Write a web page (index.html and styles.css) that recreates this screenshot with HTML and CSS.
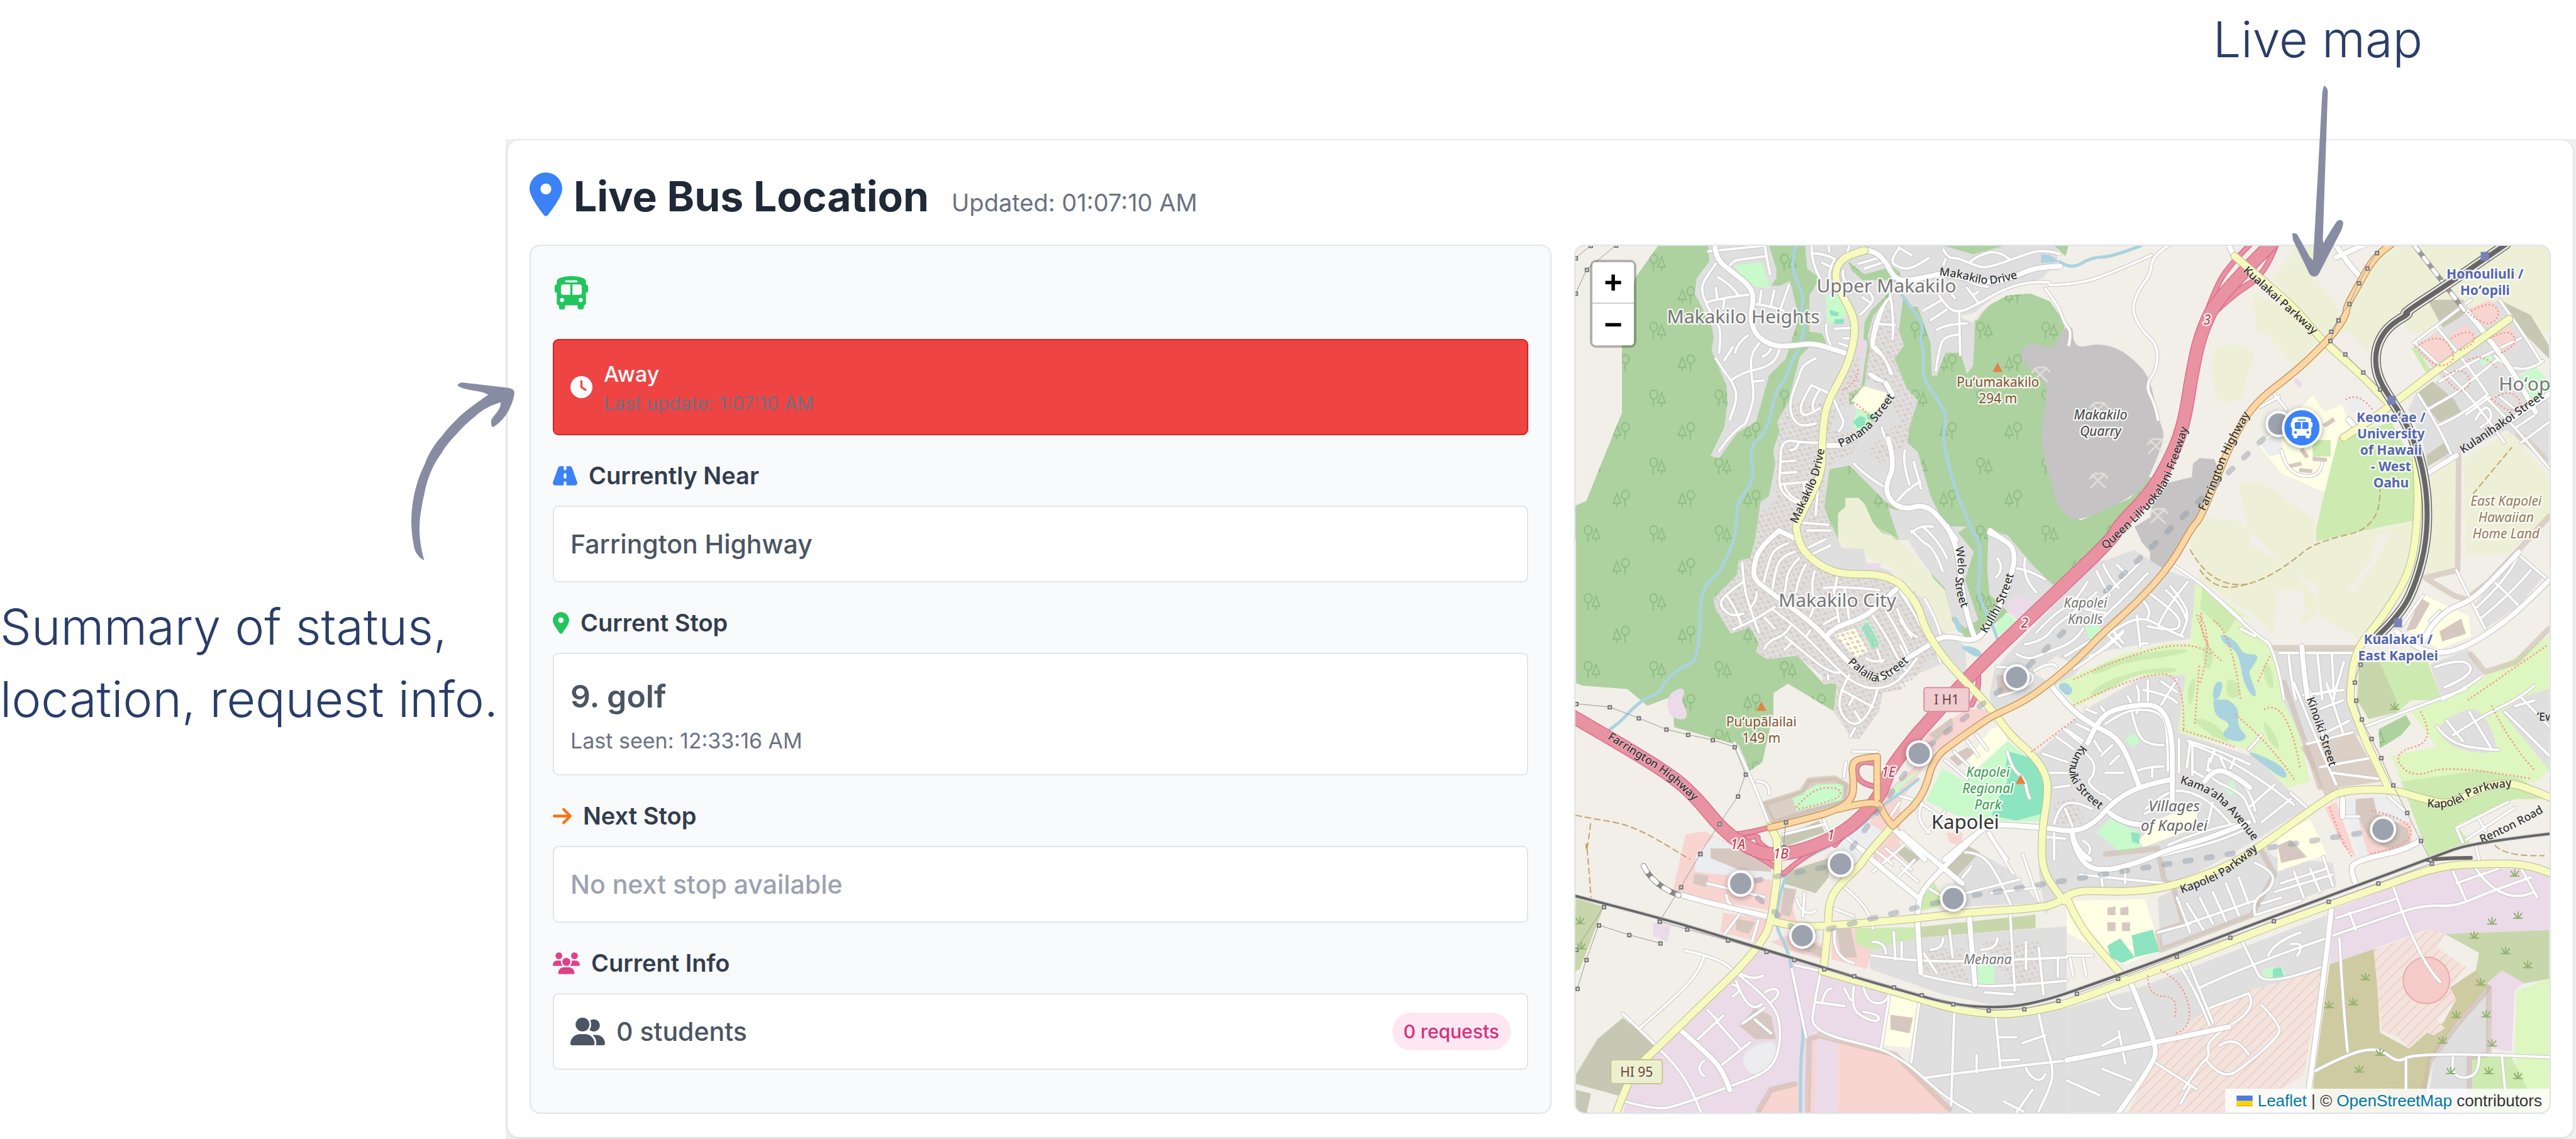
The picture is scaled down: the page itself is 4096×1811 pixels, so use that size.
FILE: index.html
```html
<!DOCTYPE html>
<html lang="en">
<head>
<meta charset="utf-8">
<meta name="viewport" content="width=device-width, initial-scale=1">
<title>Live Bus Location</title>
<link rel="stylesheet" href="styles.css">
</head>
<body>
<svg class="sprite" aria-hidden="true">
  <symbol id="i-pin" viewBox="0 0 384 512"><path d="M215.7 499.2C267 435 384 279.4 384 192C384 86 298 0 192 0S0 86 0 192c0 87.4 117 243 168.3 307.2c12.3 15.3 35.1 15.3 47.4 0zM192 128a64 64 0 1 1 0 128 64 64 0 1 1 0-128z"/></symbol>
  <symbol id="i-clock" viewBox="0 0 512 512"><path d="M256 0a256 256 0 1 1 0 512A256 256 0 1 1 256 0zM232 120V256c0 8 4 15.5 10.7 20l96 64c11 7.4 25.9 4.4 33.3-6.7s4.4-25.9-6.7-33.3L280 243.2V120c0-13.3-10.7-24-24-24s-24 10.7-24 24z"/></symbol>
  <symbol id="i-road" viewBox="0 0 576 512"><path d="M256 32H181.2c-27.1 0-51.3 17.1-60.3 42.6L3.1 407.2C1.1 413 0 419.2 0 425.4C0 455.5 24.5 480 54.6 480H256V416c0-17.7 14.3-32 32-32s32 14.3 32 32v64H521.4c30.2 0 54.6-24.5 54.6-54.6c0-6.2-1.1-12.4-3.1-18.2L455.1 74.6C446 49.1 421.9 32 394.8 32H320V96c0 17.7-14.3 32-32 32s-32-14.3-32-32V32zm64 192v64c0 17.7-14.3 32-32 32s-32-14.3-32-32V224c0-17.7 14.3-32 32-32s32 14.3 32 32z"/></symbol>
  <symbol id="i-arrow" viewBox="0 0 448 512"><path d="M438.6 278.6c12.5-12.5 12.5-32.8 0-45.3l-160-160c-12.5-12.5-32.8-12.5-45.3 0s-12.5 32.8 0 45.3L338.8 224H32c-17.7 0-32 14.3-32 32s14.3 32 32 32H338.7L233.4 393.4c-12.5 12.5-12.5 32.8 0 45.3s32.8 12.5 45.3 0l160-160z"/></symbol>
  <symbol id="i-bus" viewBox="0 0 512 512"><path d="M256 0C390.4 0 480 35.2 480 80V96l0 32c17.7 0 32 14.3 32 32v64c0 17.7-14.3 32-32 32l0 160c0 17.7-14.3 32-32 32v32c0 17.7-14.3 32-32 32H384c-17.7 0-32-14.3-32-32V448H160v32c0 17.7-14.3 32-32 32H96c-17.7 0-32-14.3-32-32l0-32c-17.7 0-32-14.3-32-32l0-160c-17.7 0-32-14.3-32-32V160c0-17.7 14.3-32 32-32h0V96h0V80C32 35.2 121.6 0 256 0zM96 160v96c0 17.7 14.3 32 32 32H240V128H128c-17.7 0-32 14.3-32 32zM272 288H384c17.7 0 32-14.3 32-32V160c0-17.7-14.3-32-32-32H272V288zM112 400a32 32 0 1 0 0-64 32 32 0 1 0 0 64zm288 0a32 32 0 1 0 0-64 32 32 0 1 0 0 64zM352 80c0-8.8-7.2-16-16-16H176c-8.8 0-16 7.2-16 16s7.2 16 16 16H336c8.8 0 16-7.2 16-16z"/></symbol>
  <symbol id="i-users" viewBox="0 0 640 512"><path d="M144 0a80 80 0 1 1 0 160A80 80 0 1 1 144 0zM512 0a80 80 0 1 1 0 160A80 80 0 1 1 512 0zM0 298.7C0 239.8 47.8 192 106.7 192h42.7c15.9 0 31 3.5 44.6 9.7c-1.3 7.2-1.9 14.7-1.9 22.3c0 38.2 16.8 72.5 43.3 96c-.2 0-.4 0-.7 0H21.3C9.6 320 0 310.4 0 298.7zM405.3 320c-.2 0-.4 0-.7 0c26.6-23.5 43.3-57.8 43.3-96c0-7.6-.7-15-1.9-22.3c13.6-6.3 28.7-9.7 44.6-9.7h42.7C592.2 192 640 239.8 640 298.7c0 11.8-9.6 21.3-21.3 21.3H405.3zM224 224a96 96 0 1 1 192 0 96 96 0 1 1 -192 0zM128 485.3C128 411.7 187.7 352 261.3 352H378.7C452.3 352 512 411.7 512 485.3c0 14.7-11.9 26.7-26.7 26.7H154.7c-14.7 0-26.7-11.9-26.7-26.7z"/></symbol>
  <symbol id="i-group" viewBox="0 0 640 512"><path d="M96 128a128 128 0 1 1 256 0A128 128 0 1 1 96 128zM0 482.3C0 383.8 79.8 304 178.3 304h91.4C368.2 304 448 383.8 448 482.3c0 16.4-13.3 29.7-29.7 29.7H29.7C13.3 512 0 498.7 0 482.3zM609.3 512H471.4c5.4-9.4 8.6-20.3 8.6-32v-8c0-60.7-27.1-115.2-69.8-151.8c2.4-.1 4.7-.2 7.1-.2h61.4C567.8 320 640 392.2 640 481.3c0 17-13.8 30.7-30.7 30.7zM432 256c-31 0-59-12.6-79.3-32.9C372.4 196.5 384 163.6 384 128c0-26.8-6.6-52.1-18.3-74.3C384.3 40.1 407.2 32 432 32c61.9 0 112 50.1 112 112s-50.1 112-112 112z"/></symbol>
</svg>

<div class="page">
  <p class="note note-map">Live map</p>
  <p class="note note-summary">Summary of status,<br>location, request info.</p>

  <div class="app">
    <main class="card">
      <header class="card-head">
        <svg class="icon icon-title" aria-hidden="true"><use href="#i-pin"/></svg>
        <h1 class="title">Live Bus Location</h1>
        <span class="updated">Updated: 01:07:10 AM</span>
      </header>

      <div class="panels">
        <section class="status">
          <div class="bus-row"><svg class="icon icon-bus" aria-hidden="true"><use href="#i-bus"/></svg></div>

          <div class="alert" role="status">
            <svg class="icon icon-clock" aria-hidden="true"><use href="#i-clock"/></svg>
            <div class="alert-text">
              <p class="alert-title">Away</p>
              <p class="alert-time">Last update: 1:07:10 AM</p>
            </div>
          </div>

          <section class="block">
            <h2 class="label"><svg class="icon icon-road" aria-hidden="true"><use href="#i-road"/></svg>Currently Near</h2>
            <div class="box"><p class="value">Farrington Highway</p></div>
          </section>

          <section class="block">
            <h2 class="label"><svg class="icon icon-stop" aria-hidden="true"><use href="#i-pin"/></svg>Current Stop</h2>
            <div class="box box-tall">
              <p class="stop-name">9. golf</p>
              <p class="stop-seen">Last seen: 12:33:16 AM</p>
            </div>
          </section>

          <section class="block">
            <h2 class="label"><svg class="icon icon-next" aria-hidden="true"><use href="#i-arrow"/></svg>Next Stop</h2>
            <div class="box"><p class="value value-empty">No next stop available</p></div>
          </section>

          <section class="block">
            <h2 class="label"><svg class="icon icon-info" aria-hidden="true"><use href="#i-users"/></svg>Current Info</h2>
            <div class="box box-row">
              <p class="value students"><svg class="icon icon-group" aria-hidden="true"><use href="#i-group"/></svg>0 students</p>
              <span class="badge">0 requests</span>
            </div>
          </section>
        </section>

        <section class="map" aria-label="Live map">
          <svg class="map-canvas" viewBox="0 0 1550 1380" preserveAspectRatio="xMidYMid slice" role="img" aria-label="Map of Kapolei">
            <defs>
              <pattern id="trees" width="104" height="108" patternUnits="userSpaceOnUse">
                <path class="tree" d="M20 28v12M20 28a6 7 0 1 1 1 0zM33 40v-5M33 18l-6 16h12z"/>
                <path class="tree" d="M66 92v-6M66 70l-6 16h12zM79 78v14M79 80a6 7 0 1 1 1 0z"/>
              </pattern>
              <pattern id="houses" width="13" height="10" patternUnits="userSpaceOnUse" patternTransform="rotate(24)">
                <rect class="house" x="1" y="1" width="6" height="4"/><rect class="house" x="8" y="6" width="4" height="3"/>
              </pattern>
              <pattern id="hatch" width="12" height="12" patternUnits="userSpaceOnUse" patternTransform="rotate(45)">
                <rect class="hatch" x="0" y="0" width="2" height="12"/>
              </pattern>
            </defs>
            <g id="tiles"></g>
          </svg>
          <div class="zoom">
            <button type="button" class="zoom-btn" aria-label="Zoom in">+</button>
            <button type="button" class="zoom-btn" aria-label="Zoom out">−</button>
          </div>
          <p class="attribution"><svg class="flag" viewBox="0 0 12 8" aria-hidden="true"><path fill="#4c7be1" d="M0 0h12v4H0z"/><path fill="#ffd500" d="M0 4h12v3H0z"/><path fill="#e0bc00" d="M0 7h12v1H0z"/></svg> <a href="#leaflet">Leaflet</a> | © <a href="#osm">OpenStreetMap</a> contributors</p>
        </section>
      </div>
    </main>
  </div>

  <svg class="pointer pointer-summary" viewBox="1210 64 302 729" preserveAspectRatio="none" aria-hidden="true"><path d="M1248 793C1232 782 1221 764 1217 730C1212 690 1210 660 1210 630C1211 550 1224 470 1249 400C1262 350 1282 310 1299 285C1320 245 1337 225 1350 205C1372 178 1398 150 1435 115C1428 106 1410 101 1395 98C1375 93 1352 87 1345 76C1349 68 1355 64 1365 65L1492 86C1505 89 1511 94 1512 106C1510 135 1502 160 1494 182C1482 212 1466 232 1452 246L1445 244C1443 225 1443 215 1450 205C1462 185 1472 170 1472 146C1440 158 1412 182 1397 203C1377 226 1360 247 1345 272C1322 305 1308 330 1299 353C1276 395 1258 450 1249 515C1240 570 1234 620 1234 665C1234 710 1240 755 1248 793Z"/></svg>
  <svg class="pointer pointer-map" viewBox="483 402 194 900" preserveAspectRatio="none" aria-hidden="true"><path d="M604 402C612 408 617 416 618 430L599 1125L601 1144C618 1108 636 1070 652 1042C662 1029 674 1034 677 1050C675 1070 668 1090 660 1106L583 1290C576 1304 556 1306 548 1288L486 1130C484 1118 483 1108 483 1098C490 1096 497 1098 502 1104L550 1210L562 1224L567 1110L597 435C599 422 601 412 604 402Z"/></svg>
</div>
<script src="map.js"></script>
</body>
</html>
```
FILE: styles.css
```css
* { box-sizing: border-box; }
body, h1, h2, p { margin: 0; }
body {
  background: #fff;
  color: #1f2937;
  font-family: Inter, "Liberation Sans", sans-serif;
}
.sprite { position: absolute; width: 0; height: 0; }
.icon { display: block; flex: none; fill: currentColor; }

.page {
  position: relative;
  display: grid;
  grid-template-columns: 804px 1fr;
  grid-template-rows: 221px auto;
}

/* hand-written notes around the screenshot */
.note {
  color: #293d68;
  font-size: 79px;
  line-height: 115px;
  font-weight: 300;
  white-space: nowrap;
}
.note-map { grid-column: 2; padding: 5px 244px 0 0; text-align: right; }
.note-summary { grid-column: 1; padding-top: 718px; }
.pointer { position: absolute; fill: #888ca3; }
.pointer-summary { left: 654px; top: 608px; width: 164px; height: 283px; }
.pointer-map { right: 370px; top: 136px; width: 81px; height: 304px; }

/* card */
.app { background: #eff0f1; padding: 2px 5px 3px 3px; }
.card {
  padding: 47px 35px 37px;
  border-radius: 18px;
  background: #fff;
  box-shadow: 0 1px 5px rgba(0, 0, 0, .14);
}
.card-head {
  display: flex;
  align-items: baseline;
  height: 78px;
  margin-bottom: 41px;
}
.icon-title { width: 52px; height: 70px; margin-right: 18px; color: #3b82f6; align-self: center; }
.title { font-size: 66px; line-height: 84px; font-weight: 700; }
.updated { margin-left: 36px; color: #6b7280; font-size: 38px; line-height: 52px; }

.panels { display: grid; grid-template-columns: 1625fr 1553fr; gap: 36px; }

/* status column */
.status {
  padding: 35px 35px 68px;
  border: 2px solid #e2e5ea;
  border-radius: 17px;
  background: #f9fafb;
}
.bus-row { display: flex; align-items: center; height: 78px; margin-bottom: 35px; }
.icon-bus { width: 53px; height: 53px; color: #22c55e; margin-left: 3px; }
.alert {
  display: flex;
  align-items: center;
  gap: 18px;
  height: 153px;
  padding: 0 26px;
  border: 2px solid #dc2020;
  border-radius: 9px;
  background: #ef4444;
}
.icon-clock { width: 35px; height: 35px; color: #fff; }
.alert-text { padding-top: 4px; }
.alert-title { color: #fff; font-size: 34px; line-height: 46px; font-weight: 500; }
.alert-time { color: #6b7280; font-size: 30px; line-height: 46px; }

.block { margin-top: 40px; }
.label {
  display: flex;
  align-items: center;
  gap: 18px;
  margin-bottom: 24px;
  color: #323d4e;
  font-size: 38px;
  line-height: 48px;
  font-weight: 600;
}
.icon-road { width: 39px; height: 35px; color: #3b82f6; }
.icon-stop { width: 26px; height: 35px; color: #22c55e; }
.icon-next { width: 30px; height: 35px; color: #f97316; }
.icon-info { width: 43px; height: 35px; color: #e0408a; }

.box {
  display: flex;
  flex-direction: column;
  justify-content: center;
  min-height: 122px;
  padding: 0 26px;
  border: 2px solid #e2e4e9;
  border-radius: 9px;
  background: #fff;
}
.box-tall { min-height: 195px; }
.box-row { flex-direction: row; align-items: center; justify-content: space-between; }
.value { color: #4b5563; font-size: 41px; line-height: 60px; font-weight: 500; }
.value-empty { color: #9ca3af; }
.students { display: flex; align-items: center; gap: 18px; }
.icon-group { width: 55px; height: 44px; }
.stop-name { padding-top: 6px; color: #4b5563; font-size: 50px; line-height: 78px; font-weight: 600; }
.stop-seen { color: #6b7280; font-size: 34px; line-height: 64px; }
.badge {
  padding: 9px 18px;
  border-radius: 32px;
  background: #fce7f3;
  color: #d62f7a;
  font-size: 30px;
  line-height: 42px;
  font-weight: 500;
}

/* map */
.map {
  position: relative;
  overflow: hidden;
  border: 2px solid #dfe3e8;
  border-radius: 17px;
  background: #f2efe9;
}
.map-canvas { position: absolute; inset: 0; width: 100%; height: 100%; }
.zoom {
  position: absolute;
  left: 23px;
  top: 22px;
  display: grid;
  width: 74px;
  border: 4px solid rgba(0, 0, 0, .26);
  border-radius: 10px;
  background-clip: padding-box;
}
.zoom-btn {
  height: 66px;
  padding: 0;
  border: 0;
  background: #fff;
  color: #000;
  font: 700 50px/60px "Liberation Sans", sans-serif;
}
.zoom-btn:first-child { border-bottom: 2px solid #ccc; border-radius: 5px 5px 0 0; }
.zoom-btn:last-child { border-radius: 0 0 5px 5px; }
.attribution {
  position: absolute;
  right: 0;
  bottom: 0;
  padding: 0 12px 0 18px;
  background: rgba(255, 255, 255, .8);
  color: #333;
  font: 26px/38px "Liberation Sans", Arial, sans-serif;
}
.attribution a { color: #0078a8; text-decoration: none; }
.flag { width: 26px; height: 17px; }

/* map drawing */
.tree { fill: none; stroke: #8fbd83; stroke-width: 2; }
.house { fill: #d9ccc5; }
.hatch { fill: #f0b9b4; opacity: .5; }
.line { fill: none; stroke-linecap: round; stroke-linejoin: round; }
.text { font-family: "Noto Sans", sans-serif; paint-order: stroke; stroke: rgba(255, 255, 255, .8); stroke-width: 5px; stroke-linejoin: round; }
.mid { text-anchor: middle; }
.t-place { fill: #777; font-size: 30px; }
.t-town { fill: #333; font-size: 31px; }
.t-street { fill: #333; font-size: 18px; font-weight: 500; stroke-width: 2px; stroke: rgba(255, 255, 255, .35); }
.t-peak { fill: #86532c; font-size: 21px; }
.t-quarry { fill: #444; font-size: 21px; font-style: italic; }
.t-station { fill: #5566b0; font-size: 21px; font-weight: 700; }
.t-land { fill: #947a5a; font-size: 21px; font-style: italic; }
.t-area { fill: #666; font-size: 24px; font-style: italic; }
.t-area-s { fill: #777; font-size: 21px; font-style: italic; }
.t-park { fill: #3c9a4e; font-size: 21px; font-style: italic; }
.t-exit { fill: #b8384f; font-size: 21px; font-style: italic; }
.t-shield { fill: #644; font-size: 21px; stroke: none; }
.marker { stroke: #fff; stroke-width: 4; fill: #9ca3af; filter: drop-shadow(0 2px 5px rgba(0, 0, 0, .35)); }
.marker-bus { fill: #3b82f6; }
.marker-icon { fill: #fff; }
```
FILE: map.js
```js
// Each sheet maps its own survey grid onto the canvas: [scaleX, scaleY, offsetX, offsetY].
const SHEETS = {
  a: [.338, .3042, -13.2, -9], b: [.338, .3042, 463.8, -9],
  c: [.4151, .338, 940.8, -390.6], d: [.3813, .4056, 993.8, 86.4],
  e: [.3549, .338, -13.2, 446.8], f: [.3549, .338, 516.8, 446.8],
  g: [.507, .3096, -13.2, 934.4], h: [.5165, .4617, 781.8, 695.9]
};

function points(text) {
  const out = [];
  let sheet, x = null;
  for (const token of text.trim().split(/\s+/)) {
    if (SHEETS[token]) { sheet = SHEETS[token]; continue; }
    if (x === null) { x = +token; continue; }
    out.push([+(x * sheet[0] + sheet[2]).toFixed(1), +(+token * sheet[1] + sheet[3]).toFixed(1)]);
    x = null;
  }
  return out;
}
const straight = (p, close) => 'M' + p.map(q => q.join(' ')).join('L') + (close ? 'Z' : '');
function smooth(p) {
  if (p.length < 3) return straight(p);
  let d = 'M' + p[0].join(' ');
  for (let i = 1; i < p.length - 1; i++) {
    const end = i === p.length - 2 ? p[i + 1] : [(p[i][0] + p[i + 1][0]) / 2, (p[i][1] + p[i + 1][1]) / 2];
    d += 'Q' + p[i].join(' ') + ' ' + end.map(v => v.toFixed(1)).join(' ');
  }
  return d;
}
function round(p) {
  const m = (u, v) => [((u[0] + v[0]) / 2).toFixed(1), ((u[1] + v[1]) / 2).toFixed(1)].join(' ');
  const n = p.length;
  let d = 'M' + m(p[n - 1], p[0]);
  for (let i = 0; i < n; i++) d += 'Q' + p[i].join(' ') + ' ' + m(p[i], p[(i + 1) % n]);
  return d + 'Z';
}

const C = {
  land: '#f2efe9',
  forest: '#aed1a0', home: '#e0dfdf', farm: '#edf0d6', quarry: '#c5c3c3', grass: '#cdebb0', golf: '#def6c0',
  park: '#c8facc', pitch: '#8ce4c0', water: '#aad3df', ind: '#ebdbe8', shop: '#f8d5d1', school: '#ffffe5',
  brown: '#c7c8b4', scrub: '#c8d7ab', heath: '#cbcda0', mil: '#f3e3dd', bld: '#d6c8c0', tan: '#dcd0c6', pale: '#ecedee'
};

const areas = [
  ['forest', 'a 430 28 1500 28 1568 1568 40 1568 40 1390 90 1365 258 905 258 545 320 200'],
  ['forest', 'b 120 150 520 420 560 350 660 290 770 280 860 320 920 400 930 460 1000 1470 1240 1350 1330 1240 1390 1260 1100 1568 150 1568 0 1250 0 100'],
  ['forest', 'e 40 0 900 0 900 600 1035 610 1150 740 1210 740 1195 870 990 740 925 785 925 880 875 1110 820 1150 770 1030 480 945 470 800 360 845 270 765 70 750 40 738'],
  ['forest', 'f 0 0 1040 0 700 280 600 300 400 480 380 520 290 520 200 400 90 80'],
  ['home', 'a 665 28 670 110 610 200 600 280 680 450 690 510 680 580 750 760 755 850 740 980 675 1130 715 1142 800 1010 890 950 950 710 1030 620 1070 480 1090 400 1050 215 1000 240 960 240 985 200 985 150 950 28'],
  ['home', 'a 1120 28 1130 150 1190 200 1140 290 1140 480 1200 490 1220 540 1140 560 1095 610 1040 850 990 950 1000 1000 970 1100 980 1170 950 1340 910 1370 885 1568 1270 1568 1210 1400 1235 1200 1330 1180 1500 1370 1568 1420 b 100 1400 150 1568 400 1568 300 1340 240 1110 190 1060 200 980 240 840 190 780 130 620 175 550 150 480 170 310 200 345 240 350 300 540 305 710 330 710 370 590 440 590 470 700 500 660 510 420 640 270 830 250 890 200 900 28'],
  ['land', 'b 420 400 500 385 620 280 830 200 950 28 1568 28 1568 1200 1400 1260 1340 1230 1390 1060 1250 600 1100 540 970 540 930 430 860 320 770 280 660 290 560 350 500 430'],
  ['forest', 'a 1520 270 1430 370 1400 430 1395 520 1415 540 1385 770 1325 800 1330 860 1360 860 1400 765 1425 560 1415 500 1440 400 1510 300'],
  ['forest', 'a 1325 115 1400 180 1530 140 1568 170 1568 230 1500 210 1390 210 1340 160'],
  ['forest', 'b 355 28 500 75 650 30'], ['forest', 'b 880 28 950 28 935 85'],
  ['farm', 'a 1310 1350 1370 1348 1400 1380 1440 1480 1480 1530 1568 1568 e 1380 0 1490 70 1568 150 f 90 180 200 300 230 420 240 490 190 500 150 470 90 330 0 240 e 1450 190 1350 150 1250 95 1215 60 a 1275 1568 1275 1430 1310 1395'],
  ['quarry', 'b 970 460 945 450 915 480 880 575 780 535 745 545 718 600 745 660 830 730 850 790 825 920 820 1110 875 1280 885 1370 935 1440 995 1470 1150 1400 1290 1310 1330 1240 1405 1030 1380 960 1330 720 1270 640 1190 570 1090 540 1000 565 970 525', 1],
  ['quarry', 'b 1568 1140 1535 1170 1530 1240 1420 1270 1340 1400 1335 1450 1260 1500 1290 1568 f 1080 70 1120 120 1120 160 1180 200 1220 170 1310 0 d 0 850 90 700 60 625 0 620'],
  ['water', 'b 820 75 860 78 910 115 820 120'],
  ['park', 'a 785 135 915 115 955 250 875 245 820 185'], ['park', 'a 1215 285 1290 290 1330 385 1225 445'],
  ['pitch', 'a 1235 365 1280 380 1275 400 1240 395'], ['pitch', 'a 1258 415 1305 415 1300 440 1258 440'],
  ['ind', 'a 1375 520 1410 525 1395 615 1365 600'],
  ['school', 'a 1395 765 1505 800 1460 915 1360 880 1340 840'], ['park', 'a 1360 890 1450 910 1440 960 1380 1005 1345 980'],
  ['pitch', 'a 1345 950 1380 920 1405 930 1400 970 1370 985'], ['pitch', 'a 1410 915 1450 910 1445 945 1415 940'],
  ['home', 'e 860 0 820 150 770 160 760 230 655 340 665 390 735 505 820 475 860 550 845 590 895 625 1030 610 1140 700 1150 745 1215 735 1195 870 1275 1000 1310 1000 1400 870 1415 780 1500 770 1568 700 f 0 730 200 640 300 700 290 560 170 480 90 330 0 270 e 1450 210 1340 170 1330 105 1230 100 1190 0'],
  ['land', 'f 0 740 200 640 300 700 150 880 0 1000'],
  ['home', 'f 20 0 300 0 260 30 330 120 290 250 350 440 290 480 230 420 200 290 120 200 50 90'],
  ['home', 'f 395 20 480 40 600 190 690 280 560 420 480 400 400 320 390 200'],
  ['land', 'f 340 540 420 480 560 420 420 560 360 600 280 560'],
  ['school', 'e 1200 510 1290 480 1350 585 1295 622'], ['park', 'e 1315 470 1350 440 1405 560 1365 583'], ['pitch', 'e 1320 475 1348 450 1400 555 1368 578'],
  ['ind', 'e 1340 175 1410 170 1400 200 1345 200'],
  ['ind', 'e 445 800 510 755 530 780 510 820 540 870 530 915 455 895', 1],
  ['shop', 'e 530 1450 620 1435 680 1470 800 1510 900 1568 g 640 180 640 400 500 360 330 310 370 20'],
  ['pale', 'g 405 110 460 20 640 160 640 240 400 200'],
  ['tan', 'e 880 1300 1050 1245 1080 1190 1200 1180 1260 1210 1250 1300 925 1398'],
  ['park', 'e 1010 1280 1120 1215 1240 1210 1230 1290 1030 1340'],
  ['brown', 'e 960 1460 1130 1385 1155 1440 970 1510'],
  ['shop', 'e 1450 1230 1568 1120 f 120 980 300 860 400 860 380 920 150 1060 0 1300 0 1568 e 1300 1568 1330 1440'],
  ['pale', 'e 1210 1530 1330 1380 1420 1440 1310 1568'],
  ['park', 'e 1450 1240 1568 1150 f 60 1110 80 1160 0 1230 e 1480 1280'],
  ['home', 'f 700 360 880 160 920 160 1050 110 1180 200 1330 260 1300 530 1050 560 850 600 780 700 430 900 400 800 420 680 500 580'],
  ['land', 'f 600 690 700 610 760 640 660 730'],
  ['home', 'f 600 1080 780 910 850 850 1100 700 1280 700 1250 970 1568 1080 h 560 230 740 430 600 530 330 700 0 715 g 1500 420 1480 200 f 640 1420 670 1250'],
  ['land', 'f 450 900 660 750 780 910 580 1070'],
  ['land', 'f 400 1420 640 1420 620 1568 480 1568'],
  ['golf', 'f 1325 265 1568 430 d 130 1230 290 1350 h 690 60 750 340 680 360 560 230 f 1400 1010 1245 970 1280 700 1060 705 790 850 700 740 1000 600 1200 550 1300 550'],
  ['grass', 'f 1350 330 1380 320 1520 420 1510 500 1350 390'],
  ['grass', 'f 840 680 1000 610 1280 570 1290 600 1000 640 880 700', 1], ['grass', 'f 840 800 900 740 1050 680 1240 660 1240 690 1060 690 900 790', 1],
  ['grass', 'f 1290 740 1330 700 1310 840 1290 840', 1], ['grass', 'f 1370 490 1400 480 1430 580 1390 570', 1], ['grass', 'f 1380 940 1440 950 1450 1000 1390 990', 1],
  ['grass', 'h 600 120 640 170 660 240 620 200', 1], ['grass', 'h 380 120 450 130 520 220 430 170', 1],
  ['water', 'f 700 750 740 730 780 770 750 805', 1], ['water', 'f 1410 750 1450 725 1440 800 1520 850 1510 940 1560 990 1520 1020 1430 985 1490 930 1400 890', 1],
  ['water', 'h 555 235 600 250 670 290 680 330 650 320 580 260', 1],
  ['park', 'f 115 1290 190 1140 290 1200 480 1010 620 1130 650 1250 630 1390 420 1385 250 1360'],
  ['pitch', 'f 485 1060 590 1090 640 1180 645 1350 520 1385 410 1360 440 1280 480 1200 470 1150'],
  ['school', 'f 300 1110 400 960 460 930 480 1010 340 1140'],
  ['park', 'f 880 1440 940 1375 1070 1440 1080 1510 1000 1545'], ['pitch', 'f 1035 1440 1075 1445 1070 1495 1040 1485'],
  ['school', 'f 1070 1480 1150 1380 1340 1310 1320 1420 1090 1510'],
  ['park', 'f 830 470 890 465 905 495 845 535'], ['park', 'f 1010 1000 1050 975 1075 1010 1040 1040'], ['park', 'f 1450 1230 1490 1195 1510 1240 1480 1270'],
  ['park', 'f 410 490 475 405 520 445 450 510'], ['ind', 'f 510 320 600 350 530 440 475 400'],
  ['water', 'f 235 420 260 430 285 510 250 490', 1], ['water', 'f 270 560 340 570 370 600 350 620 280 580', 1],
  ['farm', 'f 1330 0 1568 0 1568 270 1400 300 1300 90'],
  ['farm', 'c 470 1156 600 1156 620 1240 565 1300 640 1420 700 1568 600 1568 400 1310 485 1190'], ['farm', 'c 330 1380 420 1430 550 1568 350 1568'],
  ['farm', 'c 870 1156 1470 1156 1470 1568 940 1568 900 1510 820 1568 700 1568 740 1350 800 1230'],
  ['farm', 'd 40 190 130 170 220 190 230 240 190 300 180 400 60 410', 1], ['farm', 'd 220 0 390 40 500 150 400 260 250 100'], ['farm', 'd 600 100 650 0 900 0 780 110 700 210'],
  ['farm', 'd 0 850 170 870 210 960 380 1050 500 1180 480 1240 400 1290 300 1310 230 1240 0 1100'], ['farm', 'd 160 720 250 710 330 760 480 870 480 950 370 1050 200 900'],
  ['farm', 'd 490 950 890 870 900 960 850 1140 660 1330 500 1240 490 1120 370 1050'], ['farm', 'd 950 700 1070 620 1060 1060 945 1080 965 900'],
  ['farm', 'd 1100 620 1290 520 1456 690 1456 850 1280 1000 1110 1000'],
  ['land', 'd 320 1140 430 1140 440 1210 400 1310 310 1310'], ['land', 'd 740 920 800 900 740 1020 640 1150 620 1140 710 1020'],
  ['brown', 'd 950 0 1100 0 1100 90 1030 140'], ['brown', 'd 1250 0 1380 60 1456 180 1456 230 1340 120'],
  ['grass', 'd 570 540 800 480 890 640 900 865 760 890 485 948 485 900'],
  ['school', 'd 470 375 520 440 590 410 630 500 580 530 550 640 520 755 340 680 240 565 340 500'], ['grass', 'd 470 550 545 550 545 615 470 615'],
  ['pale', 'd 250 560 330 520 350 600 290 615'], ['pale', 'd 620 380 680 370 690 440 620 440'],
  ['bld', 'd 370 645 420 635 425 650 375 660'], ['bld', 'd 415 660 470 665 465 680 412 675'], ['bld', 'd 470 615 530 620 530 635 470 632'], ['bld', 'd 510 490 555 460 565 475 525 500'], ['bld', 'd 415 590 430 580 455 615 440 622'],
  ['ind', 'd 400 305 430 330 415 345 390 320'],
  ['home', 'd 890 180 1100 60 1250 0 1370 160 1430 240 1320 300 1456 400 1456 650 1280 510 1080 600 950 650 930 560 870 430 900 370 970 330 1010 310'],
  ['grass', 'd 880 185 905 190 960 270 945 290'],
  ['brown', 'd 900 370 970 320 1060 390 1090 440 1000 480'], ['brown', 'd 945 610 1020 560 1040 600 950 655'],
  ['park', 'd 1330 300 1400 260 1456 320 1456 380 1370 380'], ['park', 'd 1160 230 1200 205 1225 230 1180 260'],
  ['shop', 'd 910 180 990 130 1060 210 970 260'], ['shop', 'd 1110 40 1210 0 1260 60 1180 110'], ['shop', 'd 1210 150 1290 100 1330 170 1250 210'], ['shop', 'd 1040 140 1110 95 1160 150 1080 190'],
  ['golf', 'd 0 1120 130 1230 290 1350 340 1568 0 1568'], ['grass', 'd 10 1130 150 1250 110 1310 0 1210'],
  ['grass', 'd 20 1340 60 1380 40 1460 10 1420', 1], ['grass', 'd 110 1480 160 1500 170 1560 110 1560', 1], ['grass', 'd 260 1420 300 1440 310 1540 270 1500', 1],
  ['water', 'd 80 1310 120 1320 160 1350 180 1390 250 1390 220 1440 200 1460 240 1550 220 1560 180 1500 160 1380 100 1350', 1], ['water', 'd 60 1500 100 1495 80 1568 50 1568', 1],
  ['home', 'd 310 1370 640 1370 610 1568 h 920 180 730 200 d 345 1568'],
  ['scrub', 'd 665 1420 750 1420 820 1568 h 1020 100 930 125 d 655 1568'], ['grass', 'd 750 1420 950 1420 1010 1568 h 1060 60 1020 100 d 820 1568'],
  ['home', 'd 960 1430 1120 1370 1180 1470 1010 1568'], ['golf', 'd 1010 1568 1200 1470 1456 1320 h 1486 60 1486 300 1450 340 1030 340 1000 250 1140 220 1060 100'],
  ['school', 'd 920 1150 1010 1190 1120 1240 1130 1320 1000 1370 870 1300'], ['bld', 'd 920 1170 960 1190 900 1290 860 1300'], ['bld', 'd 1000 1300 1090 1250 1110 1310 1010 1340'],
  ['home', 'd 1140 1200 1330 990 1430 1090 1330 1200 1190 1290'],
  ['tan', 'd 1300 530 1340 510 1456 620 1456 640', 1],
  ['home', 'h 1130 150 1240 80 1290 110 1340 250 1190 230', 1], ['home', 'h 1340 100 1400 50 1486 20 1486 300'], ['forest', 'h 960 160 1045 110 1060 140 1030 180 965 225'],
  ['tan', 'h 720 220 880 160 970 340 840 360 800 400 750 280'],
  ['grass', 'h 1030 340 1280 300 1400 330 1486 400 1380 400 1200 490 1250 560 1115 600 1050 400'],
  ['shop', 'h 795 430 830 410 890 600 850 560'], ['pale', 'h 860 400 1000 390 1050 440 1060 580 900 600 870 480'], ['shop', 'h 900 480 1060 480 1065 560 930 600'],
  ['bld', 'h 890 400 945 395 955 450 1050 500 1060 560 1000 580 930 530 890 450'],
  ['home', 'h 280 740 600 560 640 600 820 620 830 700 290 920'],
  ['home', 'h 0 1120 200 1060 800 800 790 990 560 1060 440 1120 290 1240 240 1330 160 1480 0 1480'],
  ['school', 'h 0 750 240 745 290 920 180 970 0 860'], ['school', 'h 650 520 750 470 800 590 650 650'],
  ['pitch', 'h 125 905 165 880 210 945 170 965 135 945'], ['pitch', 'h 200 870 265 850 285 925 210 945'],
  ['park', 'h 600 990 640 975 690 1000 610 1030', 1], ['pitch', 'h 635 985 660 980 668 1010 635 1015'],
  ['ind', 'h 820 780 1150 640 1486 640 1486 855 1170 865 1110 850 810 970'], ['ind', 'h 1300 1030 1340 990 1390 1000 1410 1030 1380 1060 1370 1270 1310 1260'],
  ['mil', 'h 560 1060 790 990 730 1350 660 1400 480 1480 190 1480 290 1240 440 1120'], ['hatch', 'h 560 1060 790 990 730 1350 660 1400 480 1480 190 1480 290 1240 440 1120'],
  ['heath', 'h 810 970 950 915 965 1205 1055 1260 1115 1200 1160 1170 1200 1090 1180 1050 1260 990 1300 1040 1200 1170 1120 1300 1100 1480 760 1480 760 1380'],
  ['hatch', 'h 810 970 950 915 965 1205 1055 1260 1115 1200 1160 1170 1200 1090 1180 1050 1260 990 1300 1040 1200 1170 1120 1300 1100 1480 760 1480 760 1380'],
  ['mil', 'h 945 920 1120 850 1165 865 1140 910 1230 980 1180 1050 1200 1090 1140 1160 1165 1190 1130 1215 1110 1205 1055 1258 1020 1220 970 1200'],
  ['hatch', 'h 945 920 1120 850 1165 865 1140 910 1230 980 1180 1050 1200 1090 1140 1160 1165 1190 1130 1215 1110 1205 1055 1258 1020 1220 970 1200'],
  ['scrub', 'h 1165 865 1486 852 1486 1020 1410 1035 1340 990 1290 1040 1260 990 1270 930'], ['golf', 'h 1385 1060 1486 1020 1486 1480 1420 1480 1380 1290'],
  ['grass', 'h 1250 1290 1370 1290 1420 1400 1420 1480 1250 1480'], ['home', 'h 1300 1050 1300 1270 1250 1290 1250 1480 1110 1480 1130 1290 1240 1120'],
  ['brown', 'g 175 950 280 1090 160 1350 28 1290 28 1240 95 1060'], ['brown', 'g 28 1320 75 1340 60 1450 28 1450'], ['scrub', 'g 28 335 115 380 40 700 20 720'],
  ['shop', 'g 490 410 640 450 600 560 480 510'], ['shop', 'g 650 330 700 320 720 460 650 450'], ['shop', 'g 640 560 690 600 800 650 800 570 700 520'],
  ['brown', 'g 690 200 820 130 820 230 780 310 680 260'], ['shop', 'g 830 480 920 480 960 600 940 700 830 650'],
  ['shop', 'g 960 100 1020 0 1040 40 990 160'], ['shop', 'g 1190 0 1240 0 1240 70 1200 50'],
  ['ind', 'g 590 600 710 650 810 700 790 930 770 1040 745 1450 175 1450 190 1300 350 1000 540 710'], ['ind', 'g 270 460 325 480 315 560 270 530'],
  ['ind', 'g 795 720 1015 830 985 1110 765 1020'], ['pale', 'g 540 1150 600 1080 660 1070 650 1200 580 1260', 1],
  ['shop', 'g 770 1040 1030 1140 1200 1400 1200 1450 750 1450'], ['ind', 'g 780 1050 850 1080 850 1450 775 1450'], ['shop', 'g 590 1450 640 1320 720 1280 735 1450'],
  ['school', 'g 1015 835 1105 870 1075 1105 990 1090'], ['home', 'g 1100 870 1220 920 1350 950 1568 900 1568 1450 1200 1450 1190 1380 1080 1200'],
  ['home', 'g 950 550 1180 530 1490 490 1568 480 1568 830 1450 870 1350 890 1180 830 950 700'], ['grass', 'g 905 490 1095 485 1095 540 960 600 905 570'],
  ['scrub', 'g 1095 485 1470 420 1470 490 1095 540'], ['grass', 'g 1150 250 1180 330 1170 380 1110 400 1120 310'], ['park', 'g 1290 680 1340 680 1340 775 1290 775'],
  ['home', 'g 1210 240 1290 100 1400 200 1480 360 1230 380'], ['brown', 'g 1035 100 1060 70 1110 130 1080 170'], ['brown', 'g 1240 50 1295 100 1225 220 1190 170'],
  ['bld', 'g 450 80 540 80 640 160 640 200 540 190 450 130'], ['bld', 'g 400 210 445 220 435 280 395 260'], ['bld', 'g 680 280 720 290 700 430 670 420'], ['bld', 'g 530 440 590 460 570 520 530 500'],
  ['bld', 'g 740 540 800 590 795 640 740 600'], ['bld', 'g 845 490 890 490 910 640 860 640'], ['bld', 'g 590 900 640 940 655 1060 590 1060 540 990'],
  ['bld', 'g 1015 935 1085 950 1075 1030 1015 1010'],
  ['bld', 'f 430 700 480 700 510 790 440 790'], ['bld', 'f 130 980 230 900 240 940 160 1010'], ['bld', 'f 220 1090 300 1040 340 1060 260 1130'],
  ['bld', 'h 125 775 150 770 150 800 125 800'], ['bld', 'h 165 775 190 770 190 800 165 800'], ['bld', 'h 125 825 150 825 150 855 125 855'], ['bld', 'h 170 825 195 825 195 855 170 855'], ['bld', 'h 650 560 690 540 740 600 660 620']
];
const housing = [
  'e 860 0 820 150 770 160 760 230 655 340 665 390 735 505 820 475 860 550 845 590 895 625 1030 610 1140 700 1150 745 1215 735 1195 870 1275 1000 1310 1000 1400 870 1415 780 1500 770 1568 700 f 120 640 130 470 60 290 e 1400 250 1100 180 1000 0',
  'a 1440 380 1530 290 b 110 290 170 540 130 620 190 780 230 850 190 1060 60 1180 0 1100 a 1560 950 1500 790 1400 720',
  'a 1080 850 1200 850 1190 1200 1080 1480 900 1480 980 1350 1000 900', 'a 1210 1200 1100 1568 1260 1568 1215 1400', 'a 900 1400 1050 1480 1060 1568 890 1568',
  'a 1330 630 1370 620 1380 780 1300 870 1220 900 1230 1180 1340 1120 1380 1010 1240 1000', 'f 690 1300 780 1280 830 1400 700 1400', 'g 1110 600 1240 590 1260 760 1120 710', 'g 1300 560 1480 560 1480 780 1400 790', 'f 0 320 90 400 170 620 60 640 0 500'
];

const roads = {
  minor: [
    'a 665 60 800 45 930 30', 'a 930 28 940 100 955 180', 'a 940 85 830 100 780 110 760 140', 'a 700 125 650 200 630 260 660 350 710 440 725 500 715 590', 'a 660 325 740 300 870 285', 'a 700 250 705 300', 'a 710 195 780 240 805 290', 'a 740 305 735 360', 'a 880 335 960 345 1020 370', 'a 915 265 905 330', 'a 975 265 960 340', 'a 1045 235 1020 310 1005 360',
    'a 905 540 865 590 865 690 880 800 870 870 840 960', 'a 700 620 740 690 770 730 800 800 790 870 765 940', 'a 770 735 830 690 930 670 990 620 1000 570', 'a 880 740 925 735', 'a 960 570 945 600 920 610', 'a 790 590 800 540 850 500', 'a 740 630 780 560', 'a 840 960 780 1000 715 1105',
    'a 1150 28 1150 120 1190 200', 'a 1150 70 1210 70 1260 100', 'a 1200 120 1240 140', 'a 1330 28 1320 60', 'a 1230 28 1235 60', 'a 1260 100 1230 160 1235 200', 'a 1300 160 1290 200 1330 240', 'a 1370 125 1480 90', 'a 1400 150 1510 110', 'a 1420 270 1445 300 1430 340 1380 390', 'a 1390 300 1430 330', 'a 1260 465 1340 460', 'a 1300 515 1340 515', 'a 1280 540 1330 560', 'a 1220 440 1215 500 1240 550',
    'a 1150 760 1100 850 1100 910 1130 920 1190 880', 'a 1185 790 1145 860 1160 890', 'a 1150 760 1230 800', 'a 1170 620 1110 650 1090 720 1045 850 1060 940 1110 980 1170 960', 'a 1200 1060 1100 1060 1040 1045 1005 1080 1005 1180 995 1300 1060 1370 1110 1390', 'a 1090 1060 1080 1100 1050 1100', 'a 1005 1160 1075 1155', 'a 1005 1220 1080 1215', 'a 1000 1280 1130 1265', 'a 1025 1290 1040 1340 1100 1370', 'a 1115 1270 1115 1320', 'a 1200 1070 1270 1085 1340 1050 1400 1000', 'a 1250 820 1280 900 1310 960 1280 1000', 'a 1480 980 1510 1080 1540 1180 1500 1280 1510 1360 1568 1400', 'a 1350 1170 1400 1230 1490 1290', 'a 1180 1300 1170 1440', 'a 1110 1480 1230 1490', 'a 1130 1520 1240 1520', 'a 1520 300 1480 350 1450 430 1430 540 1440 570 1500 620 1530 700', 'a 1420 700 1450 740 1500 740',
    'b 30 560 40 450 90 320', 'b 110 290 130 430 120 520', 'b 40 560 90 610 110 700', 'b 60 440 130 445', 'b 20 700 90 750', 'b 155 40 100 110 170 155 230 140 290 95', 'b 150 40 210 80', 'b 360 50 380 95 430 95 500 130 560 150 700 95 830 45 910 75', 'b 370 100 360 130', 'b 480 120 520 80 620 55 670 100', 'b 440 200 520 240 570 245', 'b 470 250 500 290 525 330', 'b 500 290 525 270', 'b 380 260 415 305', 'b 340 290 380 360 440 380 530 330 640 260 770 215 860 222', 'b 350 315 265 370', 'b 375 365 300 420', 'b 435 380 435 500 440 600', 'b 330 470 370 440 470 437', 'b 435 495 370 500 340 560 325 685', 'b 180 1100 165 1150 200 1280', 'b 220 1160 255 1300', 'b 140 1370 190 1300 250 1265', 'b 210 1530 250 1490 310 1500', 'b 840 255 900 340 930 440 965 480 950 550', 'b 1340 80 1200 150 1000 235 860 235',
    'b 1420 28 1345 80 1335 180 1280 260 1245 360 1290 470 1370 550 1365 680 1310 760 1360 870 1370 940',
    'e 990 80 930 100 900 180 880 270', 'e 1020 120 960 140 930 220 920 300', 'e 1040 150 990 200 980 290 970 340', 'e 1070 180 1040 230 1025 310', 'e 1110 210 1095 260 1100 310', 'e 790 260 710 320 680 370 740 430 790 410', 'e 715 325 760 390 780 460', 'e 785 170 790 260 810 360 860 500', 'e 745 485 830 450 930 380', 'e 850 310 850 350 820 385', 'e 885 430 930 480', 'e 920 390 1010 460 1110 560 1220 680 1290 740 1380 770 1500 730 1568 620', 'e 1000 470 980 510 900 540 885 575', 'e 980 520 1080 610 1180 690 1220 690', 'e 1010 545 975 580', 'e 1090 490 1070 520', 'e 1170 700 1170 720', 'e 1150 290 1230 280 1400 300', 'e 1210 240 1200 300', 'e 1245 290 1265 440', 'e 1195 300 1220 455', 'e 1100 310 1120 380 1080 440', 'e 1150 460 1210 425', 'e 1370 420 1440 530 1480 620 1520 680', 'e 1430 400 1490 500 1530 600', 'e 1480 390 1520 500 1568 520', 'e 1490 300 1550 360 1568 400', 'e 1390 580 1410 640', 'e 1340 620 1370 645 1420 630', 'e 1265 700 1230 760 1215 870 1290 950 1370 860 1390 770', 'e 1230 770 1300 810 1370 850', 'e 1285 800 1265 840', 'e 1290 870 1315 915', 'e 1290 950 1270 990', 'e 1080 100 1160 60', 'e 1100 130 1180 90',
    'e 1250 1110 1240 1180', 'e 850 1200 910 1200 905 1260', 'e 1280 1060 1390 1060', 'e 970 1450 1160 1400', 'e 1150 1380 1170 1430', 'e 1440 1380 1490 1300', 'e 1250 1460 1330 1540', 'e 750 1020 820 1160 905 1400',
    'f 110 80 150 90 190 210', 'f 100 0 170 60 210 150', 'f 50 20 110 80', 'f 435 150 470 195 430 240', 'f 500 195 570 200 650 250', 'f 560 150 545 240 610 310', 'f 840 260 790 350 690 410 610 500', 'f 880 310 800 390 700 460 640 540 560 555', 'f 880 210 910 280 940 325', 'f 910 180 940 250 980 290', 'f 970 180 1010 220', 'f 1070 175 990 260 850 390', 'f 1110 220 1010 330 900 440', 'f 830 390 930 410', 'f 820 480 790 540 640 600 570 630 520 600', 'f 850 540 740 610', 'f 780 670 900 590 1000 490', 'f 930 510 990 570', 'f 1000 500 900 600 850 610', 'f 930 510 1010 450 1100 430 1180 480 1270 520', 'f 1060 420 1080 580 1070 550 1110 550', 'f 1090 350 1130 400 1110 430', 'f 1110 310 1190 370 1260 440 1240 500 1110 470', 'f 1290 260 1200 370 1160 460', 'f 1210 280 1260 340 1300 430 1260 510', 'f 1140 270 1200 200', 'f 1190 300 1260 360 1280 430', 'f 960 500 1000 550', 'f 1220 180 1300 230 1450 360 1530 440',
    'f 0 310 60 400 110 510 150 560', 'f 0 440 50 520', 'f 110 340 160 430 180 510', 'f 0 560 40 640', 'f 60 640 30 690 0 710', 'f 150 560 180 640',
    'f 600 680 680 630 700 660', 'f 430 660 600 670 590 760 440 800', 'f 410 900 430 890', 'f 200 1100 250 1140 300 1190', 'f 300 1010 350 1080', 'f 240 1060 310 1130', 'f 340 980 390 1050',
    'f 1060 750 1080 790 1060 880', 'f 1110 725 1110 830', 'f 1090 770 1200 790 1240 830', 'f 1170 730 1240 780', 'f 1240 720 1170 840', 'f 1020 800 1040 840', 'f 830 860 880 880', 'f 900 850 930 890', 'f 920 930 1000 870 1100 860 1170 880 1200 960 1200 1150', 'f 1040 880 1060 980 1120 1030 1180 1030', 'f 790 930 850 960', 'f 730 950 810 1020', 'f 700 990 780 1050', 'f 640 1070 750 1110', 'f 660 1160 750 1160', 'f 690 1230 760 1220', 'f 820 1060 870 1100 870 1170 830 1210 900 1260', 'f 870 1010 900 1060', 'f 950 1030 900 1080', 'f 980 1080 940 1120', 'f 1000 1160 920 1160', 'f 1060 1150 1120 1130 1180 1130', 'f 1130 1130 1130 1180', 'f 910 1260 960 1300', 'f 690 1400 710 1320 780 1290 860 1330', 'f 740 1330 780 1430', 'f 1290 1010 1400 1040 1568 1120', 'f 1310 1020 1310 1170', 'f 1410 1050 1390 1110', 'f 1500 1090 1480 1140', 'f 1250 1000 1250 1160', 'f 1310 1150 1360 1180', 'f 1100 1330 1190 1250 1280 1240 1400 1300 1480 1400', 'f 1200 1500 1350 1430 1500 1400', 'f 1400 1300 1380 1400', 'f 1170 1550 1330 1510 1480 1460 1540 1430', 'f 480 1060 500 1140 560 1190 570 1260 580 1280', 'f 400 1440 430 1500 480 1568', 'f 640 1460 740 1470', 'f 690 1440 690 1568', 'f 820 1480 870 1510 840 1550', 'f 0 1270 110 1290 260 1440', 'f 100 1300 60 1380 130 1440', 'f 200 1340 120 1440',
    'd 310 370 360 430', 'd 250 420 330 380', 'd 340 590 360 680 500 700 510 640', 'd 900 170 1050 300 1180 440 1270 560', 'd 990 110 1100 230 1200 370', 'd 1110 40 1210 170', 'd 1250 0 1370 160 1420 240', 'd 890 170 1130 0', 'd 960 280 1220 110', 'd 1000 320 1130 240 1340 150', 'd 1060 370 1260 220', 'd 1110 450 1210 380', 'd 1230 220 1330 310 1430 240', 'd 1190 380 1300 480 1456 660', 'd 1320 500 1400 450', 'd 1340 560 1456 480', 'd 1150 470 1190 400 1230 470 1170 500', 'd 910 370 1000 500 1050 610', 'd 1000 490 1100 450 1200 370', 'd 950 430 1060 370', 'd 1250 380 1330 440', 'd 370 1390 380 1500 400 1568', 'd 490 1390 510 1568', 'd 550 1390 560 1568', 'd 330 1385 640 1385', 'd 430 1550 600 1530', 'd 600 1420 560 1550', 'd 280 1340 320 1390 350 1568', 'd 160 1250 230 1310 290 1350', 'd 0 1110 160 1250', 'd 170 1290 230 1320', 'd 1070 1060 1130 1180 1190 1290', 'd 1150 1210 1280 1100 1330 1000', 'd 1170 1250 1300 1150 1380 1060', 'd 1220 1100 1280 1150 1340 1210', 'd 1330 1000 1440 1090', 'd 1010 1568 1100 1530 1170 1480', 'd 980 1440 1100 1400 1150 1470 1020 1520', 'd 840 1280 930 1160', 'd 960 1260 1000 1220',
    'h 700 0 770 200 830 350', 'h 740 0 790 180', 'h 800 0 850 170', 'h 770 40 830 20', 'h 780 90 850 60', 'h 800 170 870 130', 'h 740 210 880 170', 'h 780 290 930 260', 'h 820 310 960 330', 'h 1140 150 1180 210 1300 230 1330 230', 'h 1170 130 1220 200', 'h 1240 100 1310 230', 'h 1190 180 1270 120 1400 50 1440 10', 'h 1350 100 1486 250', 'h 1400 50 1486 150', 'h 1380 80 1440 60', 'h 920 150 1060 90 1230 20', 'h 1200 500 1360 410', 'h 1230 540 1380 430', 'h 1200 500 1220 550', 'h 1270 470 1290 510', 'h 1260 560 1270 610',
    'h 860 460 900 460', 'h 990 390 1040 440', 'h 600 180 560 230', 'h 440 260 420 320 540 380 560 430 580 480', 'h 430 300 500 300 570 380 580 440', 'h 560 430 640 350', 'h 600 480 690 400', 'h 470 250 490 300', 'h 690 380 740 430', 'h 380 200 370 290', 'h 380 210 520 260 700 420', 'h 240 450 300 420', 'h 0 160 50 200', 'h 40 660 300 690', 'h 105 650 110 700', 'h 180 640 180 690',
    'h 340 740 380 860', 'h 370 760 420 850', 'h 410 740 450 830', 'h 450 720 490 820', 'h 490 690 530 800', 'h 530 670 560 760', 'h 370 830 580 750', 'h 580 620 640 650 630 710 570 750 580 800', 'h 640 720 820 660', 'h 660 690 800 640', 'h 700 650 730 740', 'h 750 640 780 720', 'h 790 600 820 700', 'h 280 860 380 830', 'h 580 800 720 750', 'h 600 760 660 740',
    'h 410 1050 560 970 800 880', 'h 540 890 570 960 610 1050 780 980', 'h 340 960 400 1060 440 1180', 'h 370 950 450 1170', 'h 440 1120 560 1070', 'h 620 940 640 890 720 860', 'h 690 900 740 890 710 940', 'h 560 1070 590 1120 430 1230 440 1290 420 1300 360 1400', 'h 600 1110 660 1180 650 1220 560 1310 480 1370 430 1300', 'h 470 1250 520 1210 560 1280', 'h 275 1310 400 1400', 'h 350 1450 380 1390', 'h 0 1370 100 1420', 'h 110 1330 200 1370', 'h 120 1060 140 1140 200 1120', 'h 110 1250 160 1220', 'h 160 1200 180 1310', 'h 0 940 80 940', 'h 10 950 20 1010', 'h 50 950 60 1010',
    'h 840 880 850 1100 865 1270', 'h 760 1340 860 1280 960 1255 1020 1310 1060 1280 1300 1280 1486 1290', 'h 1045 1300 1045 1400', 'h 1190 1290 1180 1360 1270 1360 1270 1290', 'h 1340 1280 1350 1400', 'h 820 870 1000 800 1100 765 1200 770 1300 720 1430 670', 'h 1005 700 1080 950 1150 1030', 'h 830 810 1010 745', 'h 1190 650 1230 750', 'h 1260 640 1340 770 1440 720', 'h 1200 690 1330 640', 'h 1400 640 1450 740', 'h 870 790 890 850',
    'g 175 930 280 1090 380 1270 420 1436', 'g 230 1000 350 830 420 700 430 630', 'g 370 605 470 640 540 730 640 870 670 970 665 1130 630 1230 500 1310 350 1400 280 1425 180 1380', 'g 410 1060 490 940', 'g 470 970 545 1110', 'g 480 1200 575 1075', 'g 440 910 470 960', 'g 540 720 580 760 615 735', 'g 620 820 650 790 670 830 640 870', 'g 530 760 550 850 590 910 610 880', 'g 430 1170 400 1210 430 1250', 'g 520 780 560 800 520 840', 'g 550 980 620 900', 'g 590 960 640 1030', 'g 705 700 750 1050', 'g 715 680 795 710', 'g 795 720 775 880 765 1020 990 1110 1030 1150 1080 1200 1200 1380 1270 1436', 'g 780 870 870 890', 'g 900 790 890 900 940 960 980 970 975 930 930 920', 'g 930 790 940 870 1000 880 1010 830', 'g 800 870 810 800 830 800', 'g 870 800 890 860', 'g 1105 870 1080 1180', 'g 985 1110 1010 850', 'g 1120 1260 1280 1220 1568 1170', 'g 1215 920 1205 1400', 'g 1285 1140 1285 1230', 'g 1345 950 1360 1210', 'g 1350 1050 1410 1050', 'g 1360 1170 1420 1165', 'g 1480 930 1500 1080 1525 1200 1520 1300 1480 1430', 'g 1430 1080 1500 1040', 'g 1440 1210 1450 1250 1490 1280 1500 1240', 'g 1460 1320 1410 1436', 'g 1370 1380 1430 1430',
    'g 955 630 1080 660 1300 660 1568 640', 'g 1110 730 1260 790 1400 785 1568 760', 'g 1025 510 1030 650', 'g 1200 500 1210 640', 'g 1180 540 1180 600 1140 600', 'g 1390 400 1395 560 1405 810', 'g 1480 590 1495 830', 'g 1350 540 1350 600 1300 600', 'g 960 560 1000 560 1000 620', 'g 1050 560 1050 640', 'g 1440 560 1440 700', 'g 1540 640 1540 740', 'g 1120 620 1160 720', 'g 1310 820 1400 830',
    'g 870 280 950 380 960 490', 'g 960 80 1020 160', 'g 1000 80 1080 190', 'g 1090 140 1030 240', 'g 1060 60 960 200', 'g 1100 250 1050 180', 'g 1130 280 1180 330', 'g 1250 100 1300 100 1360 240 1400 400', 'g 1270 170 1240 230', 'g 1320 0 1360 100 1400 210', 'g 1430 110 1480 350', 'g 1250 310 1420 240', 'g 1330 310 1480 280', 'g 440 260 620 330', 'g 500 320 500 400 620 440', 'g 540 420 490 530', 'g 600 450 580 560', 'g 880 30 960 120', 'g 720 340 740 440 780 400', 'g 745 310 740 430', 'g 840 390 900 430', 'g 840 500 830 640 900 670'
  ],
  mid: [
    'a 695 28 700 100 780 170 850 230 880 290 865 380 870 450 900 510 970 555 1050 555 1150 540 1220 560 1330 600',
    'a 1400 50 1460 65 1500 120 b 90 120 130 200 180 215 300 190 350 175 440 195 590 230 700 190 800 140 910 138', 'b 90 750 120 810', 'a 1200 1075 1280 1075',
    'b 100 1040 135 1170 85 1290 110 1370 180 1410 260 1385 330 1430 420 1568', 'b 580 1520 640 1568', 'f 210 0 255 90 270 250 300 430 335 530',
    'f 400 30 490 70 515 140 500 220 470 330 420 420 370 510 320 540 240 520 180 520 130 560 0 640 e 1480 680 1400 720 1330 700 1240 620 1160 520 1080 440 990 370 900 300 840 250 835 200 860 100 950 20', 'e 950 20 1030 60',
    'e 1160 520 1190 480 1300 440 1370 400 1480 290', 'f 670 740 750 850 870 940 970 990 1030 1100 1070 1220', 'f 840 1020 870 950 920 880 1000 850 1130 835 1190 880 1220 1000 1220 1200 1220 1290',
    'f 450 1405 640 1415 770 1440 870 1400 960 1290 1080 1220 1220 1190', 'f 940 1350 1000 1400 1080 1405', 'f 770 1440 780 1520 850 1568', 'f 1365 1200 1400 1150 1470 1150 1568 1230', 'f 200 1568 310 1470 380 1420', 'e 1460 1420 1568 1530 f 110 1568', 'd 950 680 1070 610', 'd 1300 470 1456 370',
    'd 820 1300 900 1370 1020 1390 1130 1350 1230 1290 1340 1210 1456 1100', 'd 930 1340 960 1280 1040 1210 1130 1180 1220 1100 1330 990', 'd 1070 0 1130 60 1220 170 1320 300 1400 440', 'd 425 1360 430 1450 450 1568', 'c 650 1210 760 1150', 'c 650 1156 700 1250 740 1300', 'd 620 470 640 490',
    'g 360 320 440 360 630 430', 'g 1050 0 1180 180 1240 260', 'g 1290 0 1180 180 1110 300 1100 400 1100 500 1110 720', 'g 950 130 1030 240 1100 330', 'g 1262 420 1270 600 1280 780', 'g 360 1020 430 1120 490 1220 510 1320', 'h 815 780 800 950 740 1450', 'h 200 1040 240 1150 275 1250 270 1310 160 1480', 'h 0 1300 270 1240 500 1185',
    'h 20 540 40 620 110 650 220 620 320 570 430 540 560 480', 'h 850 400 850 460', 'h 890 690 870 640 900 610 1060 570 1090 540', 'c 240 1160 260 1210'
  ],
  yellow: [
    'a 1400 55 1320 80 1270 130 1262 210 1300 300 1350 400 1355 500 1330 620 1290 720 1215 870 1200 1060 1200 1220 1130 1380 1080 1490 e 1025 0 1040 80 1080 140 1160 200 1240 225 1400 225 1480 260 f 10 280 80 370 110 480 180 600 280 720 350 790 430 890 500 990 600 1080 660 1180 660 1280 640 1400 635 1500 g 1490 150 1510 250 1560 350',
    'g 640 450 700 480 800 480 950 460 1100 440 1250 410 1450 390 1530 370 h 10 725 60 715 200 720 330 700 500 630 600 560 700 480 800 400 850 370 1000 365 1100 400 1180 420 1260 370 1330 345 1400 350 1500 400',
    'h 0 740 30 820 100 920 180 1020', 'g 800 710 950 780 1100 850 1220 910 1350 935 1450 920 1568 880 h 200 1020 400 940 600 850 820 760 1000 690 1150 630 1300 622 1430 625 1500 660',
    'e 910 1410 950 1490 g 655 30 665 120 655 280 640 450 620 540 540 700 430 870 280 1110 220 1200 180 1320 150 1460', 'e 1450 1420 1330 1560 g 930 150 840 290 820 380 820 480 805 700',
    'c 260 1205 380 1330 500 1460 d 500 150 620 250 700 320 790 410 850 450 900 580 910 750 905 900 880 1050 820 1160 740 1270 660 1360 635 1450 625 1568 h 880 80 920 200 960 290 990 360', 'd 1290 75 1150 170 980 280 830 390 700 480 600 540'
  ],
  orange: [
    'c 860 1150 800 1200 740 1330 690 1440 d 610 60 560 130 500 190 400 280 220 410 130 560 70 700 0 860 f 1310 0 1220 170 1080 340 900 510 800 620 680 730 560 820 440 880 400 900 250 1010 150 1090 110 1250 40 1340 e 1568 1300 1460 1410',
    'e 910 1418 1100 1370 1220 1330 1280 1280 1285 1200 1275 1120 1310 1090 1390 1085', 'e 1390 1085 1390 1280', 'e 1220 1330 1390 1280 1420 1360 1460 1410'
  ],
  ramp: ['c 320 1150 230 1260 180 1380 150 1480', 'c 420 1150 380 1290 240 1400 160 1500', 'c 240 1400 300 1340 340 1320', 'e 1400 1230 1330 1215 1295 1170 1300 1120 1340 1105 1380 1115', 'f 320 840 355 780 350 700', 'f 330 700 250 740 210 800', 'e 800 1470 860 1450 850 1490 930 1540', 'e 720 1450 800 1450 910 1415', 'e 1200 1500 1280 1400 1400 1320', 'g 560 90 640 150 675 210', 'g 850 20 740 120 680 210'],
  motorway: ['c 400 1150 200 1390 130 1568 b 1530 700 1495 950 1440 1120 1340 1320 1180 1500 f 960 50 640 370 330 680 100 950 e 1568 980 1440 1150 1400 1280 1250 1440 1050 1530 900 1550 790 1500 690 1420 590 1290 480 1180 200 1000 0 880']
};
const styles = {
  minor: ['#c9c7c6', 6, '#fff', 4], mid: ['#c2c0bf', 10, '#fff', 8], yellow: ['#b9bb8a', 13, '#f7fabf', 11],
  orange: ['#c29a5c', 12, '#fcd6a4', 9], ramp: ['#dd6d8c', 9, '#e892a2', 6], motorway: ['#dd6d8c', 22, '#e892a2', 19]
};
const water = [
  'a 1075 28 1055 130 1080 210 1115 300 1100 370 1120 460 1090 570 1050 650 1030 730 980 790 960 920 930 1010 870 1070 865 1150 880 1220 850 1310 800 1370 795 1500 e 750 60 710 160 680 220 620 270 595 370 600 440 580 640 510 660 430 740 420 780 350 810 290 860 240 920 180 965',
  'b 165 290 240 400 265 450 250 510 270 600 260 720 350 860 375 930 355 1040 390 1200 420 1320 470 1450 500 1540 f 355 60 360 200 345 320 400 430 440 540', 'b 910 115 960 155 1060 90 1150 90 1290 30',
  'e 1400 1330 1300 1430 g 800 90 700 160 670 300 650 470 690 590 705 700 720 850 745 1000 730 1200 733 1450', 'e 1420 1310 1568 1200 f 80 1190'
];
const pink = ['d 900 185 1000 120 1080 240 970 270 910 190', 'd 1050 150 1120 110 1160 170 1080 200', 'd 1120 50 1210 0 1260 60 1190 110 1120 50', 'd 1210 150 1290 110 1330 180 1250 210', 'd 1020 300 1090 260 1140 330 1070 370 1020 300', 'd 1110 240 1180 200 1240 270', 'd 1220 390 1280 350 1350 400 1290 450 1220 390', 'd 610 390 660 360 720 430', 'd 0 1240 60 1330 0 1500', 'd 60 1260 130 1300 170 1568', 'd 290 1400 240 1500', 'f 590 1060 780 910', 'f 780 720 900 660 1060 600 1200 560 1340 560 1390 600', 'f 780 840 1060 700 1280 690 1270 960', 'f 1330 420 1380 560', 'f 1350 410 1340 560 1450 640', 'f 1270 960 1400 1000 1500 1040', 'f 1340 660 1320 940', 'h 610 90 680 50 720 300', 'h 520 110 620 200 700 330', 'h 1090 100 1140 200 1000 240 1060 330 1180 280 1430 330', 'h 1310 80 1360 200 1440 300', 'd 1120 1568 1456 1350', 'h 250 1010 250 1080 350 1080 330 1160', 'h 290 990 360 1030 390 1190 330 1210', 'h 810 430 850 560 880 600', 'h 940 440 1060 470 1060 560 930 590', 'e 1030 1320 1100 1230 1230 1230 1220 1290 1040 1330', 'a 1370 680 1360 760 1290 790', 'a 1350 850 1420 900 1440 960'];
const paths = ['d 0 1060 60 1140 240 1110 380 1030 480 950 760 890 750 740', 'd 1140 760 1300 580', 'e 40 1360 110 1375 260 1400 400 1470 550 1568 g 385 135', 'e 105 1400 85 1568 g 60 0 75 330', 'f 1300 110 1400 300 1568 270', 'h 1310 530 1310 600 1470 595'];
const borders = ['d 1080 610 1075 1060 940 1090 1060 1160 1130 1180', 'd 1456 850 1340 970 1200 1110 1130 1160', 'd 1130 1390 1190 1460 1320 1420 1456 1290', 'd 300 1365 650 1365', 'h 670 0 750 260 780 360', 'h 330 710 360 830 280 860 290 920 570 800 590 760', 'h 600 580 640 660 590 760', 'h 120 590 280 570 300 680 330 700', 'h 1300 1050 1200 1180 1120 1300 1090 1440', 'h 1300 1050 1300 1280 1240 1290 1240 1400', 'g 755 1430 760 1060 790 1040 1030 1140 1200 1420', 'g 600 1430 640 1320 715 1290', 'e 885 1305 1050 1250 1085 1195 1200 1185 1255 1220 1250 1295 925 1395 885 1305'];
const power = ['e 40 835 190 850 320 902 444 955 541 980 652 1005 750 1038 800 1167 765 1270 683 1400 595 1540', 'e 980 1392 970 1510', 'g 418 108 357 278 290 455', 'g 99 474 194 524 292 567', 'g 115 380 28 600', 'g 99 474 60 652 32 800', 'a 40 280 92 155 230 28', 'a 40 95 110 30', 'g 290 455 376 495 504 552 625 610 712 652 806 700 900 735 1025 793 1112 833 1211 880 1322 912 1434 905 1541 862', 'c 805 1190 768 1262 736 1332 699 1430 657 1506 630 1560', 'd 577 80 543 160 605 213 680 284 750 350', 'd 669 1430 645 1500', 'h 891 60 908 125 938 192 968 258 1005 352 1048 447 1090 543 1120 610', 'h 30 1070 157 1018 338 942 503 877 637 820 806 753 959 690 1124 622'];
const rail = 'g 20 322 300 440 500 540 700 640 900 740 1050 810 1180 870 1280 895 1400 895 1500 860 h 20 1062 300 950 600 820 890 700 1130 600 1250 550 1500 518';
const tram = 'c 1300 1150 1100 1320 900 1480 d 880 50 790 100 740 170 730 250 750 320 800 395 870 500 920 620 950 780 945 950 905 1100 840 1230 740 1320';

const out = [];
const line = (d, color, width, extra = '') => out.push(`<path class="line" d="${d}" stroke="${color}" stroke-width="${width}" ${extra}/>`);

for (const [kind, text, soft] of areas) {
  const p = points(text), d = soft ? round(p) : straight(p, true);
  out.push(`<path d="${d}" fill="${kind === 'hatch' ? 'url(#hatch)' : C[kind]}"/>`);
  if (kind === 'forest') out.push(`<path d="${d}" fill="url(#trees)"/>`);
}
housing.forEach(t => out.push(`<path d="${straight(points(t), true)}" fill="url(#houses)"/>`));
borders.forEach(t => line(straight(points(t)), '#cbb8ac', 9, 'opacity=".55"'));
const [disc] = points('h 1108 1025');
out.push(`<ellipse cx="${disc[0]}" cy="${disc[1]}" rx="37" ry="37" fill="#f4cbc8" stroke="#eba9a6" stroke-width="2"/>`);
water.forEach(t => line(smooth(points(t)), C.water, 5));
paths.forEach(t => line(smooth(points(t)), '#c4a46c', 2, 'stroke-dasharray="9 6"'));

for (const kind of ['minor', 'mid', 'ramp', 'motorway', 'yellow', 'orange']) {
  const [edge, w1, fill, w2] = styles[kind];
  const ds = roads[kind].map(t => smooth(points(t)));
  ds.forEach(d => line(d, edge, w1));
  ds.forEach(d => line(d, fill, w2));
}
pink.forEach(t => line(smooth(points(t)), '#f39a8d', 3, 'stroke-dasharray="0 6"'));
line(smooth(points('g 240 170 270 270 350 320')), '#888', 9);
line(smooth(points('g 240 170 270 270 350 320')), '#fff', 7, 'stroke-dasharray="10 14"');
line(smooth(points('c 950 1156 1060 1330 1140 1460')), '#999', 8);
line(smooth(points('c 950 1156 1060 1330 1140 1460')), '#fff', 6, 'stroke-dasharray="10 14"');
line(smooth(points(rail)), '#ddd', 7);
line(smooth(points(rail)), '#666', 4);
line(smooth(points('h 1110 610 1180 603 1245 603')), '#666', 6);
for (const [c, w] of [['#666', 16], ['#eeece8', 13], ['#666', 8]]) line(smooth(points(tram)), c, w);
power.forEach(t => {
  const p = points(t);
  line(straight(p), '#999', 1);
  p.forEach(q => out.push(`<rect x="${q[0] - 2}" y="${q[1] - 2}" width="5" height="5" fill="#ddd" stroke="#777" stroke-width="2"/>`));
});
for (const q of points('c 1218 1206 d 798 394 825 1267')) out.push(`<rect x="${q[0] - 6}" y="${q[1] - 7}" width="13" height="14" fill="#7882b8"/>`);
for (const q of points('b 615 668 e 871 848 f 540 1192')) out.push(`<path d="M${q[0] - 8} ${q[1] + 7}l8-15 8 15z" fill="#e08346"/>`);
for (const q of points('b 815 700 1088 1255 1360 1075 1370 1440 1088 885')) out.push(`<path class="line" d="M${q[0] - 11} ${q[1] + 12}l20-20m-18 0l20 20m-24-14l8-8h6m2 0h6l6 7" stroke="#e6e3df" stroke-width="3" opacity=".8"/>`);
for (const q of points('h 1010 80 1380 655 1310 820 1390 800 1255 868 1352 922 1420 970 920 1012 808 1108 882 1098 1200 1142 1292 1140 1158 1230 1310 1240 900 1330 965 1272 1300 1335 1390 1352 1183 1335 1275 1030 g 40 450 45 580')) out.push(`<path class="line" d="M${q[0] - 7} ${q[1] + 5}h14M${q[0]} ${q[1] + 5}v-10M${q[0] - 1} ${q[1] + 4}l-5-7M${q[0] + 1} ${q[1] + 4}l5-7" stroke="#93b06f" stroke-width="2"/>`);

// planned route between stops
line('M1119 284L702 687L547 808L422 984L263 1015L361 1098L601 1039L1285 929', '#8f99a8', 9, 'stroke-dasharray="9 25" opacity=".45"');

const label = (at, cls, ...rows) => {
  const [p] = points(at);
  rows.forEach((row, i) => out.push(`<text class="text mid ${cls}" x="${p[0]}" y="${p[1] + i * 26}">${row}</text>`));
};
let n = 0;
const along = (at, text, cls = 't-street') => {
  const id = 'curve' + (++n);
  out.push(`<path id="${id}" d="${smooth(points(at))}" fill="none"/><text class="text mid ${cls}"><textPath href="#${id}" startOffset="50%">${text}</textPath></text>`);
};
label('a 830 435', 't-place', 'Makakilo Heights');
label('b 92 275', 't-place', 'Upper Makakilo');
label('e 1212 378', 't-place', 'Makakilo City');
label('d 1385 357', 't-place', 'Hoʻopili');
label('f 292 1425', 't-town', 'Kapolei');
label('b 617 768', 't-peak', 'Puʻumakakilo', '294 m');
label('e 871 943', 't-peak', 'Puʻupālailai', '149 m');
label('b 1100 940', 't-quarry', 'Makakilo', 'Quarry');
label('c 1220 1310', 't-station', 'Honouliuli /', 'Hoʻopili');
label('d 797 480', 't-station', 'Keoneʻae /', 'University', 'of Hawaii', '- West', 'Oahu');
label('d 827 1350', 't-station', 'Kualakaʻi /', 'East Kapolei');
label('d 1277 808', 't-land', 'East Kapolei', 'Hawaiian', 'Home Land');
label('f 830 383', 't-area-s', 'Kapolei', 'Knolls');
label('f 1228 1342', 't-area', 'Villages');
label('f 1228 1432', 't-area', 'of Kapolei');
label('g 1320 675', 't-area-s', 'Mehana');
label('f 393 1178', 't-park', 'Kapolei', 'Regional', 'Park');
label('h 1485 130', 't-street', 'ʻEwa');
label('c 155 1528', 't-exit', '3'); label('f 558 478', 't-exit', '2'); label('e 1440 1180', 't-exit', '1E');
label('e 1183 1475', 't-exit', '1'); label('e 765 1518', 't-exit', '1A'); label('e 958 1562', 't-exit', '1B');
along('a 1075 1500 1130 1370 1190 1230 1215 1080', 'Makakilo Drive');
along('b 325 185 430 195 530 230 620 230 725 195', 'Makakilo Drive');
along('a 1265 1095 1360 1050 1450 970 1555 800', 'Panana Street');
along('f 885 145 b 1200 1545 1390 1340 1470 1140 1525 930', 'Queen Liliʻuokalani Freeway');
along('d 10 850 70 730 120 590 220 430', 'Farrington Highway');
along('e 160 985 300 1080 450 1175 585 1310', 'Farrington Highway');
along('c 275 1258 400 1400 580 1595', 'Kualakai Parkway');
along('f 243 85 270 190 235 280 280 400', 'Welo Street');
along('f 375 525 430 430 480 330 515 205', 'Kulihi Street');
along('e 1230 615 1330 720 1430 740 1560 610', 'Palailai Street');
along('f 830 1005 750 1100 770 1240 915 1350', 'Kumuiki Street');
along('h 338 342 430 370 510 450 580 555', 'Kamaʻaha Avenue');
along('h 335 732 450 690 530 630 605 560', 'Kapolei Parkway');
along('h 1095 425 1180 440 1270 365 1385 355', 'Kapolei Parkway');
along('h 1262 560 1370 510 1485 435', 'Renton Road');
along('h 735 45 770 150 812 300', 'Kinoiki Street');
along('d 1080 615 1250 510 1456 370', 'Kulanihakoi Street');

const shield = (at, w, text, fill, stroke) => {
  const [p] = points(at);
  out.push(`<rect x="${p[0] - w / 2}" y="${p[1] - 19}" width="${w}" height="38" rx="4" fill="${fill}" stroke="${stroke}" stroke-width="2"/><text class="text mid t-shield" x="${p[0]}" y="${p[1] + 8}">${text}</text>`);
};
shield('f 208 815', 72, 'I H1', '#f0cdd0', '#d98f9d');
shield('g 218 1227', 82, 'HI 95', '#edf0d0', '#c3c690');

for (const [x, y] of [[1119, 284], [702, 687], [547, 808], [422, 984], [263, 1015], [361, 1098], [601, 1039], [1285, 929]]) out.push(`<circle class="marker" cx="${x}" cy="${y}" r="19"/>`);
out.push('<circle class="marker marker-bus" cx="1156" cy="290" r="30"/><svg class="marker-icon" x="1138" y="272" width="35" height="35"><use href="#i-bus"/></svg>');
document.getElementById('tiles').innerHTML = out.join('');
```
